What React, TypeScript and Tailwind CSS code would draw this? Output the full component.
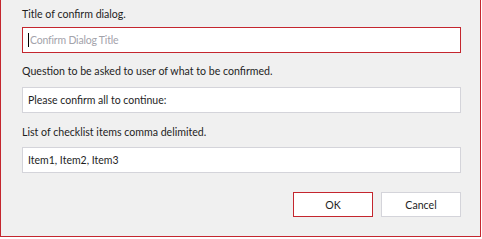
import React from 'react';

const font = { fontFamily: 'Lato, "Open Sans", Arial, sans-serif' };

// Read-only text box look-alike
const Field: React.FC<{ value?: string; placeholder?: string; focused?: boolean }> = ({
  value,
  placeholder,
  focused = false,
}) => (
  <div
    className={`flex items-center h-[26px] pl-[5px] bg-white border text-[10.5px] ${
      focused ? 'border-[#c4262e]' : 'border-[#d4d4da]'
    }`}
  >
    {focused && <span className="inline-block w-px h-[14px] bg-black mr-px" />}
    {value ? (
      <span className="text-[#1e1e1e]">{value}</span>
    ) : (
      <span className="text-[#a3a3ab] tracking-[-0.2px]">{placeholder}</span>
    )}
  </div>
);

export default function App() {
  return (
    <div className="w-[482px] h-[239px] bg-white" style={font}>
      <div className="w-[481px] h-[237px] bg-[#f0f0f0] border-x border-b border-[#c4262e] pl-[21px] pr-[19px] pt-[6px] text-[10.6px] leading-[16px] text-[#1e1e1e]">
        {/* Title */}
        <div className="mb-[5px]">Title of confirm dialog.</div>
        <Field placeholder="Confirm Dialog Title" focused />

        {/* Question */}
        <div className="mt-[10px] mb-[8px]">Question to be asked to user of what to be confirmed.</div>
        <Field value="Please confirm all to continue:" />

        {/* Checklist */}
        <div className="mt-[11px] mb-[7px]">List of checklist items comma delimited.</div>
        <Field value="Item1, Item2, Item3" />

        {/* Actions */}
        <div className="flex justify-end gap-[8px] mt-[19px]">
          <button className="w-[80px] h-[25px] bg-white border border-[#c4262e] text-[#1e1e1e]">OK</button>
          <button className="w-[80px] h-[25px] bg-white border border-[#d4d4da] text-[#1e1e1e]">Cancel</button>
        </div>
      </div>
    </div>
  );
}
